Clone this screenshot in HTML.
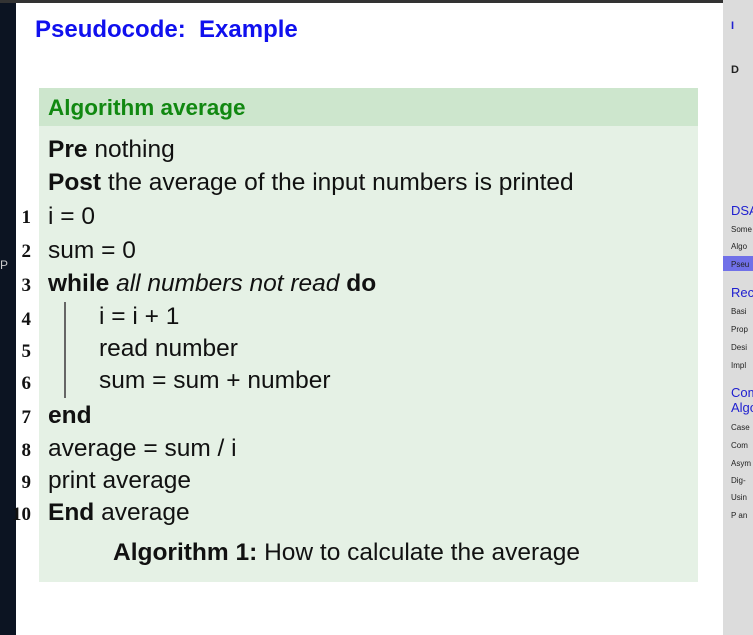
<!DOCTYPE html>
<html><head><style>
body{margin:0;width:753px;height:635px;overflow:hidden;background:#fff;font-family:"Liberation Sans",sans-serif;position:relative}
.a{position:absolute;white-space:nowrap}
.t{font-size:24.5px;color:#111;line-height:1}
.n{font-family:"Liberation Serif",serif;font-weight:bold;font-size:19px;right:722px;text-align:right;color:#111;line-height:1}
#side{position:absolute;left:723px;top:0;width:30px;height:635px;background:#dcdcdc;overflow:hidden}
#side div{position:absolute;left:8px;white-space:nowrap;font-size:8px;color:#222}
#side .h{font-size:13px;color:#2020d0;left:8px}
</style></head><body>
<div class="a" style="left:0;top:0;width:16px;height:635px;background:#0c1422"></div>
<div class="a" style="left:0;top:0;width:753px;height:3px;background:#333"></div>
<div class="a" style="left:0;top:258px;color:#ccc;font-size:12px">P</div>
<div class="a" style="left:35px;top:16px;font-size:24px;font-weight:bold;color:#1010ee">Pseudocode:&nbsp; Example</div>
<div class="a" style="left:39px;top:88px;width:659px;height:38px;background:#cde6cd"></div>
<div class="a" style="left:39px;top:126px;width:659px;height:456px;background:#e5f1e5"></div>
<div class="a" style="left:48px;top:95px;font-size:22.5px;font-weight:bold;color:#118811">Algorithm average</div>
<div class="a t" style="left:48px;top:138px"><b>Pre</b> nothing</div>
<div class="a t" style="left:48px;top:171px"><b>Post</b> the average of the input numbers is printed</div>
<div class="a t" style="left:48px;top:205px">i = 0</div>
<div class="a t" style="left:48px;top:239px">sum = 0</div>
<div class="a t" style="left:48px;top:272px"><b>while</b> <i>all numbers not read</i> <b>do</b></div>
<div class="a t" style="left:99px;top:305px">i = i + 1</div>
<div class="a t" style="left:99px;top:337px">read number</div>
<div class="a t" style="left:99px;top:369px">sum = sum + number</div>
<div class="a t" style="left:48px;top:404px"><b>end</b></div>
<div class="a t" style="left:48px;top:437px">average = sum / i</div>
<div class="a t" style="left:48px;top:469px">print average</div>
<div class="a t" style="left:48px;top:501px"><b>End</b> average</div>
<div class="a t" style="left:113px;top:541px"><b>Algorithm 1:</b> How to calculate the average</div>
<div class="a" style="left:64px;top:302px;width:2px;height:96px;background:#666"></div>
<div class="a n" style="top:208px">1</div>
<div class="a n" style="top:242px">2</div>
<div class="a n" style="top:276px">3</div>
<div class="a n" style="top:310px">4</div>
<div class="a n" style="top:342px">5</div>
<div class="a n" style="top:374px">6</div>
<div class="a n" style="top:408px">7</div>
<div class="a n" style="top:441px">8</div>
<div class="a n" style="top:473px">9</div>
<div class="a n" style="top:505px">10</div>
<div id="side">
<div style="top:20px;font-weight:bold;color:#2020d0;font-size:11px">I</div>
<div style="top:64px;font-weight:bold;font-size:11px">D</div>
<div class="h" style="top:203px">DSA</div>
<div style="top:225px">Some</div>
<div style="top:242px">Algo</div>
<div style="top:256px;left:0;width:30px;height:15px;background:#7070e8"></div>
<div style="top:260px">Pseu</div>
<div class="h" style="top:285px">Rec</div>
<div style="top:307px">Basi</div>
<div style="top:325px">Prop</div>
<div style="top:343px">Desi</div>
<div style="top:361px">Impl</div>
<div class="h" style="top:385px">Com</div>
<div class="h" style="top:400px">Algo</div>
<div style="top:423px">Case</div>
<div style="top:441px">Com</div>
<div style="top:459px">Asym</div>
<div style="top:476px">Dig-</div>
<div style="top:493px">Usin</div>
<div style="top:511px">P an</div>
</div>
</body></html>
